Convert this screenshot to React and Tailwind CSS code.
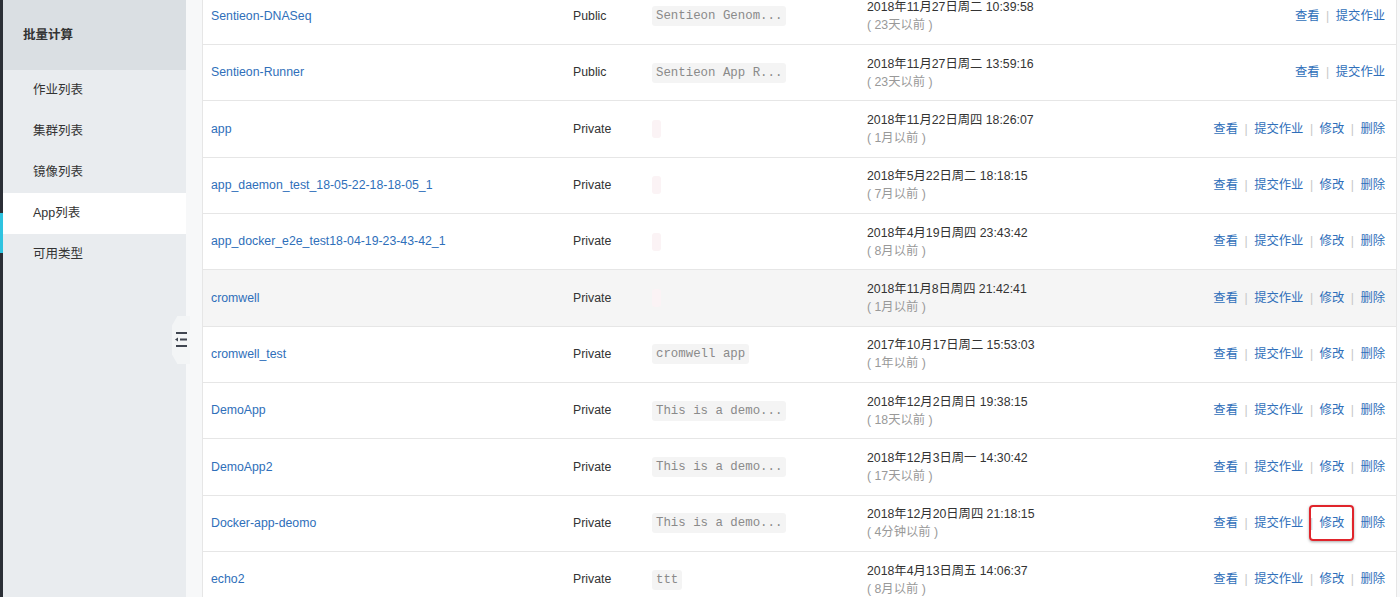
import React from 'react';

const rows = [
  { name: 'Sentieon-DNASeq', type: 'Public', desc: 'Sentieon Genom...', date: '2018年11月27日周二 10:39:58', ago: '23天以前', full: false },
  { name: 'Sentieon-Runner', type: 'Public', desc: 'Sentieon App R...', date: '2018年11月27日周二 13:59:16', ago: '23天以前', full: false },
  { name: 'app', type: 'Private', desc: '', date: '2018年11月22日周四 18:26:07', ago: '1月以前', full: true },
  { name: 'app_daemon_test_18-05-22-18-18-05_1', type: 'Private', desc: '', date: '2018年5月22日周二 18:18:15', ago: '7月以前', full: true },
  { name: 'app_docker_e2e_test18-04-19-23-43-42_1', type: 'Private', desc: '', date: '2018年4月19日周四 23:43:42', ago: '8月以前', full: true },
  { name: 'cromwell', type: 'Private', desc: '', date: '2018年11月8日周四 21:42:41', ago: '1月以前', full: true, hover: true },
  { name: 'cromwell_test', type: 'Private', desc: 'cromwell app', date: '2017年10月17日周二 15:53:03', ago: '1年以前', full: true },
  { name: 'DemoApp', type: 'Private', desc: 'This is a demo...', date: '2018年12月2日周日 19:38:15', ago: '18天以前', full: true },
  { name: 'DemoApp2', type: 'Private', desc: 'This is a demo...', date: '2018年12月3日周一 14:30:42', ago: '17天以前', full: true },
  { name: 'Docker-app-deomo', type: 'Private', desc: 'This is a demo...', date: '2018年12月20日周四 21:18:15', ago: '4分钟以前', full: true, marked: true },
  { name: 'echo2', type: 'Private', desc: 'ttt', date: '2018年4月13日周五 14:06:37', ago: '8月以前', full: true },
];

const menu = ['作业列表', '集群列表', '镜像列表', 'App列表', '可用类型'];

function Sep() {
  return <span className="mx-[6.5px] text-[#c8c8c8]">|</span>;
}

function Row({ row }) {
  return (
    <div
      className={`flex items-center h-[56.33px] border-b border-[#e6e6e6] ${
        row.hover ? 'bg-[#f5f5f5]' : 'bg-white'
      }`}
    >
      <div className="w-[370px] pl-[8px] text-[#2f6fba]">{row.name}</div>
      <div className="w-[79px] text-[#333]">{row.type}</div>
      <div className="w-[215px]">
        {row.desc ? (
          <span className="inline-block bg-[#f4f4f4] rounded-[3px] px-[4px] leading-[20px] text-[#8a8a8a] font-['Liberation_Mono',monospace] text-[12.4px]">
            {row.desc}
          </span>
        ) : (
          <span className="block w-[9px] h-[18px] bg-[#fbf3f5] rounded-[3px]" />
        )}
      </div>
      <div className="flex-1 leading-[18px]">
        <div className="text-[#333]">{row.date}</div>
        <div className="text-[#999]">( {row.ago} )</div>
      </div>
      <div className="pr-[11px] text-[#2f6fba] flex items-center">
        <span>查看</span>
        <Sep />
        <span>提交作业</span>
        {row.full && (
          <>
            <Sep />
            <span className="relative">
              修改
              {row.marked && (
                <span className="absolute left-[-11px] right-[-10px] top-[-9px] bottom-[-8px] border-2 border-[#e0242b] rounded-[4px] shadow-[0_1px_3px_rgba(0,0,0,0.35)]" />
              )}
            </span>
            <Sep />
            <span>删除</span>
          </>
        )}
      </div>
    </div>
  );
}

export default function App() {
  return (
    <div className="flex w-[1400px] h-[597px] overflow-hidden bg-[#f7f8f9] font-['Liberation_Sans','Noto_Sans_CJK_SC',sans-serif] text-[12.3px]">
      <div className="w-[3px] flex flex-col">
        <div className="h-[213px] bg-[#2b2f36]" />
        <div className="h-[40px] bg-[#2fc3e0]" />
        <div className="flex-1 bg-[#2b2f36]" />
      </div>

      <div className="relative w-[183px] bg-[#e9ecef] flex flex-col">
        <div className="h-[70px] bg-[#dadfe3] flex items-center pl-[20px] font-bold text-[#333] text-[12.5px]">
          批量计算
        </div>
        {menu.map((m) => (
          <div
            key={m}
            className={`h-[41px] flex items-center pl-[30px] text-[#333] text-[12.5px] ${
              m === 'App列表' ? 'bg-white' : ''
            }`}
          >
            {m}
          </div>
        ))}
        <div className="absolute left-[169px] top-[316px] w-[18px] h-[48px] bg-[#f3f5f6] [clip-path:polygon(30%_0,100%_0,100%_100%,30%_100%,0_80%,0_20%)]">
          <svg className="absolute left-[3px] top-[15px]" width="12" height="17" viewBox="0 0 12 17">
            <rect x="1" y="1" width="11" height="2" fill="#3f4550" />
            <rect x="5" y="7.5" width="7" height="2" fill="#3f4550" />
            <path d="M0 8.5 L3 6.5 L3 10.5 Z" fill="#3f4550" />
            <rect x="1" y="14" width="11" height="2" fill="#3f4550" />
          </svg>
        </div>
      </div>

      <div className="w-[16px]" />

      <div className="w-[1195px] h-[610px] mt-[-11.33px] border-x border-[#e6e6e6] bg-white">
        {rows.map((r) => (
          <Row key={r.name} row={r} />
        ))}
      </div>
    </div>
  );
}
